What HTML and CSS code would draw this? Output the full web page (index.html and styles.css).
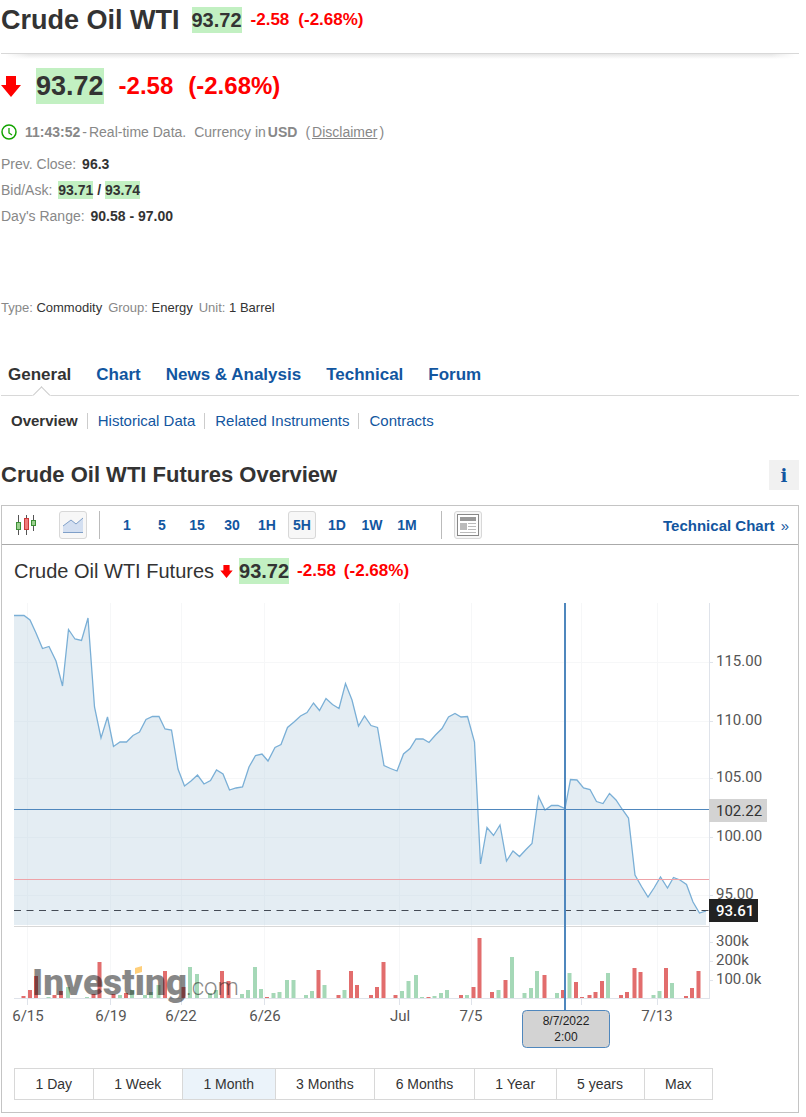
FILE: index.html
```html
<!DOCTYPE html>
<html lang="en">
<head>
  <meta charset="UTF-8" />
  <meta name="viewport" content="width=device-width, initial-scale=1.0"/>
  <title>Crude Oil WTI Futures</title>
  <link rel="stylesheet" href="styles.css">
</head>
<body>
  <header class="page-header">
    <h1>Crude Oil WTI</h1>
    <span class="price">93.72</span>
    <span class="change">-2.58</span>
    <span class="change">(-2.68%)</span>
  </header>

  <section class="quote">
    <svg class="arrow" width="20" height="21" viewBox="0 0 20 21" aria-hidden="true"><path fill="#f00" d="M5 0h10v9h5L10 21 0 9h5z"/></svg>
    <span class="price">93.72</span>
    <span class="change">-2.58</span>
    <span class="change">(-2.68%)</span>
  </section>
  <div class="quote-time">
    <svg width="16" height="16" viewBox="0 0 16 16" fill="none" aria-hidden="true"><circle cx="8" cy="8" r="7" stroke="#13a300" stroke-width="1.5"/><path stroke="#13a300" stroke-width="1.3" d="M8 4v5l3 2"/></svg>
    <p><b>11:43:52</b> <span>-</span> <span>Real-time Data.</span></p>
    <p><span>Currency in</span> <b>USD</b></p>
    <p><span>(</span> <a href="#">Disclaimer</a> <span>)</span></p>
  </div>
  <ul class="stats">
    <li>Prev. Close: <b>96.3</b></li>
    <li>Bid/Ask: <b><mark>93.71</mark> / <mark>93.74</mark></b></li>
    <li>Day's Range: <b>90.58 - 97.00</b></li>
  </ul>
  <ul class="details">
    <li>Type: <span>Commodity</span></li>
    <li>Group: <span>Energy</span></li>
    <li>Unit: <span>1 Barrel</span></li>
  </ul>

  <nav class="tabs">
    <a href="#" class="active">General</a>
    <a href="#">Chart</a>
    <a href="#">News &amp; Analysis</a>
    <a href="#">Technical</a>
    <a href="#">Forum</a>
  </nav>
  <nav class="subtabs">
    <a href="#" class="active">Overview</a>
    <a href="#">Historical Data</a>
    <a href="#">Related Instruments</a>
    <a href="#">Contracts</a>
  </nav>

  <div class="overview-title">
    <h2>Crude Oil WTI Futures Overview</h2>
    <button class="info-btn" aria-label="Information">i</button>
  </div>

  <section class="chart-box">
    <div class="toolbar">
      <button class="tool" aria-label="Candlestick chart">
        <svg width="22" height="22" viewBox="0 0 22 22">
          <path stroke="#555" d="M3.5 1v20M11.500 1v20M18.500 1v16"/>
          <rect x="1.500" y="8.500" width="4" height="7" fill="#9bd08f" stroke="#3d8f36"/>
          <rect x="9.500" y="4.500" width="4" height="11" fill="#f07c7c" stroke="#c93a3a"/>
          <rect x="16.500" y="6.500" width="4" height="5" fill="#9bd08f" stroke="#3d8f36"/>
        </svg>
      </button>
      <button class="tool active" aria-label="Area chart">
        <svg width="20" height="16" viewBox="0 0 20 16">
          <path fill="#d3dff1" d="M0 9 8 3l5 4 7-6v14H0z"/>
          <path fill="none" stroke="#7f9fc8" d="M0 9 8 3l5 4 7-6M0 15.500h20"/>
        </svg>
      </button>
      <span class="divider"></span>
      <div class="intervals">
        <button>1</button>
        <button>5</button>
        <button>15</button>
        <button>30</button>
        <button>1H</button>
        <button class="active">5H</button>
        <button>1D</button>
        <button>1W</button>
        <button>1M</button>
      </div>
      <span class="divider"></span>
      <button class="tool active" aria-label="News">
        <svg width="22" height="22" viewBox="0 0 22 22">
          <rect x=".5" y=".5" width="21" height="21" fill="#fff" stroke="#888"/>
          <path fill="#999" d="M3 3h16v4H3z"/>
          <path fill="#bbb" d="M3 9h7v7H3z"/>
          <path stroke="#bbb" d="M11 9.500h8M11 12.500h8M11 15.500h8M3 18.500h16"/>
        </svg>
      </button>
      <a href="#" class="technical-link">Technical Chart <span>»</span></a>
    </div>

    <div class="chart-title">
      <h3>Crude Oil WTI Futures</h3>
      <svg class="arrow" width="13" height="13" viewBox="0 0 20 21" aria-hidden="true"><path fill="#f00" d="M5 0h10v9h5L10 21 0 9h5z"/></svg>
      <span class="price">93.72</span>
      <span class="change">-2.58</span>
      <span class="change">(-2.68%)</span>
    </div>

    <svg class="chart" viewBox="14 600 772 450" role="img" aria-label="Crude Oil WTI price and volume, one month">
      <!-- grid and axes -->
      <path class="grid" d="M27.500 603V998M110.500 603V998M181.500 603V998M264.500 603V998M399.500 603V998M471.500 603V998M581.500 603V998M657.500 603V998M14 662.500H709M14 721.500H709M14 778.500H709M14 837.500H709M14 895.500H709"/>
      <path class="axis" d="M709.500 603V998M14 998.500H710M27.500 998v7M110.500 998v7M181.500 998v7M264.500 998v7M399.500 998v7M471.500 998v7M581.500 998v7M657.500 998v7M709 662.500h4M709 721.500h4M709 778.500h4M709 837.500h4M709 895.500h4M709 942.500h4M709 961.500h4M709 980.500h4"/>

      <!-- price -->
      <path class="area" d="M14 925V615.500L24 615.500 30 620 36 633 42.500 648.500 49 646.500 56 661 62.500 686 68.500 629.500 75 639 81.500 640.500 88 618 94.500 707 101 738 107.500 717 113.500 746.500 120 742 126.500 742 133 735.500 139.500 732 146 719.500 152.500 716.500 159 716.500 165 729 171.500 730 178 769 184.500 786 191 781 197.500 775 204 784 210.500 780.500 216.500 770 223 774 229.500 790 236 788 242.500 787 249 767 255.500 755.500 262 754 268 761 275 747.500 281 744.500 287.500 727.500 294 722 300.500 716 307 712.500 313.500 703 319.500 710.500 326 698.500 332.500 704.500 339 708.500 345.500 683.500 352 700 358.500 726 364.500 716 371 725.500 377.500 727.500 384 765.500 390.500 768.500 397 771 403.500 754 410 748.500 416 739 423 739 429 742.500 435.500 735 442 728.500 448.500 717 455 713.500 461 717 467.500 716.500 474.500 742 480.500 864 487 827.500 493.500 835.500 500 825 506.500 861 513 851 519.500 856.500 526 849.500 532 843.500 538.500 796.500 545 810 551.500 805.500 558 805.500 565 808.500 570.500 779.500 577 780 583.500 788 590 789.500 596.500 801.500 603 803.500 609.500 793.500 616 800 622 809 628.500 818 635 875 641.500 886.500 648 897 654 888 660.500 877 667.500 888 673.500 877.500 680 880 686.500 884.500 693 902 699.500 913 706 911V925z"/>
      <path class="line" d="M14 615.500L24 615.500 30 620 36 633 42.500 648.500 49 646.500 56 661 62.500 686 68.500 629.500 75 639 81.500 640.500 88 618 94.500 707 101 738 107.500 717 113.500 746.500 120 742 126.500 742 133 735.500 139.500 732 146 719.500 152.500 716.500 159 716.500 165 729 171.500 730 178 769 184.500 786 191 781 197.500 775 204 784 210.500 780.500 216.500 770 223 774 229.500 790 236 788 242.500 787 249 767 255.500 755.500 262 754 268 761 275 747.500 281 744.500 287.500 727.500 294 722 300.500 716 307 712.500 313.500 703 319.500 710.500 326 698.500 332.500 704.500 339 708.500 345.500 683.500 352 700 358.500 726 364.500 716 371 725.500 377.500 727.500 384 765.500 390.500 768.500 397 771 403.500 754 410 748.500 416 739 423 739 429 742.500 435.500 735 442 728.500 448.500 717 455 713.500 461 717 467.500 716.500 474.500 742 480.500 864 487 827.500 493.500 835.500 500 825 506.500 861 513 851 519.500 856.500 526 849.500 532 843.500 538.500 796.500 545 810 551.500 805.500 558 805.500 565 808.500 570.500 779.500 577 780 583.500 788 590 789.500 596.500 801.500 603 803.500 609.500 793.500 616 800 622 809 628.500 818 635 875 641.500 886.500 648 897 654 888 660.500 877 667.500 888 673.500 877.500 680 880 686.500 884.500 693 902 699.500 913 706 911"/>
      <path stroke="#d8d8d8" d="M14 926.500H709"/>
      <path stroke="#4f87bd" d="M14 809.500H709"/>
      <path stroke="#eea3a8" d="M14 879.500H709"/>
      <path stroke="#444b55" stroke-dasharray="7 5.500" d="M14 910.500H709"/>

      <!-- volume -->
      <path class="vol up" d="M48.500 998V997M68 998V987M87 998V997M120 998V995M132 998V990M145 998V995M151 998V992M158.500 998V985M190 998V967M197 998V974M210 998V993M216 998V990M242 998V994M248 998V990M255 998V967M261 998V989M273.500 998V993M279.500 998V992M287 998V980M293.500 998V980M306 998V995M312 998V991M324.500 998V985M344.500 998V990M402 998V991M408.500 998V981M416 998V975M422 998V997M434.500 998V996M441 998V993M447 998V990M467 998V995M498.500 998V990M512 998V957M524.500 998V993M531 998V988M537 998V971M557 998V993M569.500 998V973M608 998V973M653.500 998V995M659.500 998V991M672 998V983"/>
      <path class="vol down" d="M23.500 998V996M30 998V990M36 998V976M54.500 998V995M61 998V991M93.500 998V994M99.500 998V962M113.500 998V994M126 998V993M165 998V971M183.500 998V987M222 998V971M228.500 998V981M267 998V997M318.500 998V970M338.500 998V995M351 998V971M357 998V985M371 998V995M377 998V987M383.500 998V962M395.500 998V995M428.500 998V997M461 998V995M473.500 998V987M479.500 998V938M492 998V992M505.500 998V980M544.500 998V975M563 998V990M576 998V982M582 998V997M589.500 998V995M595.500 998V992M602 998V981M621 998V995M627 998V992M634.500 998V968M640.500 998V972M666 998V968M686 998V996M692 998V988M698.500 998V971"/>

      <!-- logo -->
      <g class="logo">
        <text class="logo-name" x="32" y="995">Investing</text>
        <text class="logo-com" x="186" y="995">.com</text>
      </g>
      <path fill="#fff" d="M133 964h11v11h-11z"/>
      <path fill="#ffcf7a" d="M135 968l7-2v6l-7 2z"/>

      <!-- crosshair -->
      <path stroke="#4f87bd" stroke-width="2" d="M565 603V1010"/>
      <rect x="522.500" y="1010.500" width="87" height="37" rx="4" fill="#d3d3d3" stroke="#4f87bd"/>
      <g class="cross-date">
        <text x="566" y="1025">8/7/2022</text>
        <text x="566" y="1041">2:00</text>
      </g>

      <g class="labels">
        <text x="716" y="666">115.00</text>
        <text x="716" y="725">110.00</text>
        <text x="716" y="782">105.00</text>
        <text x="716" y="841">100.00</text>
        <text x="716" y="899">95.00</text>
        <text x="716" y="946">300k</text>
        <text x="716" y="965">200k</text>
        <text x="716" y="984">100.0k</text>
      </g>
      <path fill="#d3d3d3" d="M709 799h58v23h-58z"/>
      <text class="cross-price" x="716" y="816">102.22</text>
      <path fill="#222" d="M709 899h49v23h-49z"/>
      <text class="last-price" x="716" y="916">93.61</text>
      <g class="labels dates">
        <text x="28" y="1021">6/15</text>
        <text x="111" y="1021">6/19</text>
        <text x="181" y="1021">6/22</text>
        <text x="265" y="1021">6/26</text>
        <text x="400" y="1021">Jul</text>
        <text x="471" y="1021">7/5</text>
        <text x="657" y="1021">7/13</text>
      </g>
    </svg>

    <div class="ranges">
      <button>1 Day</button>
      <button>1 Week</button>
      <button class="active">1 Month</button>
      <button>3 Months</button>
      <button>6 Months</button>
      <button>1 Year</button>
      <button>5 years</button>
      <button>Max</button>
    </div>
  </section>
</body>
</html>
```
FILE: styles.css
```css
* {
  box-sizing: border-box;
}
body {
  margin: 0;
  padding: 0 7px 4px 1px;
  font-family: "Liberation Sans", Arial, sans-serif;
  font-size: 14px;
  color: #333;
  background: #fff;
}
h1, h2, h3, p, ul {
  margin: 0;
  padding: 0;
}
ul {
  list-style: none;
}
a {
  color: #1256a0;
  text-decoration: none;
}
button {
  padding: 0;
  border: 0;
  background: none;
  font-family: inherit;
  color: inherit;
  cursor: pointer;
}
.price {
  background: #c2f0c2;
  font-size: 20px;
  line-height: 26px;
  font-weight: bold;
}
.change {
  color: #f00;
  font-size: 17px;
  font-weight: bold;
}
.page-header {
  position: relative;
  display: flex;
  align-items: center;
  gap: 9px;
  height: 54px;
  padding-bottom: 13px;
  border-bottom: 1px solid #d8d8d8;
}
.page-header::after {
  content: "";
  position: absolute;
  left: 4px;
  right: 4px;
  top: 100%;
  height: 5px;
  margin-top: 1px;
  background: linear-gradient(to right, #fff, transparent 3%, transparent 97%, #fff), linear-gradient(#e6e6e6, #fff);
}
.page-header h1 {
  font-size: 27px;
  line-height: 36px;
  margin-right: 3px;
}
.quote {
  display: flex;
  align-items: center;
  gap: 15px;
  margin-top: 14px;
}
.quote .price {
  font-size: 27px;
  line-height: 36px;
}
.quote .change {
  font-size: 24px;
}
.quote-time {
  display: flex;
  align-items: center;
  gap: 8px;
  margin-top: 18px;
  line-height: 20px;
  color: #888;
}
.quote-time p {
  display: flex;
  gap: 2px;
}
.quote-time a {
  color: #888;
  text-decoration: underline;
}
.stats {
  margin-top: 9px;
  line-height: 26px;
  color: #888;
}
.stats b {
  margin-left: 2px;
  color: #333;
}
.stats mark {
  padding: 1px 0;
  background: #c2f0c2;
  color: #333;
}
.details {
  display: flex;
  gap: 6px;
  margin-top: 69px;
  font-size: 13px;
  line-height: 20px;
  color: #888;
}
.details span {
  color: #333;
}
.tabs {
  display: flex;
  gap: 25px;
  margin-top: 37px;
  padding-left: 7px;
  border-bottom: 1px solid #d8d8d8;
  font-size: 17px;
  line-height: 40px;
  font-weight: bold;
}
.tabs .active {
  position: relative;
  color: #333;
}
.tabs .active::after {
  content: "";
  position: absolute;
  left: 50%;
  bottom: -7px;
  width: 11px;
  height: 11px;
  margin-left: -5px;
  border: 1px solid #ccc;
  border-right-color: transparent;
  border-bottom-color: transparent;
  background: #fff;
  transform: rotate(45deg);
}
.subtabs {
  display: flex;
  padding: 17px 0;
  font-size: 15px;
  line-height: 16px;
}
.subtabs a {
  padding: 0 9px 0 10px;
}
.subtabs a + a {
  border-left: 1px solid #ccc;
}
.subtabs .active {
  color: #333;
  font-weight: bold;
}
.overview-title {
  display: flex;
  align-items: center;
  justify-content: space-between;
  margin-top: 14px;
}
.overview-title h2 {
  font-size: 22px;
  line-height: 30px;
}
.info-btn {
  width: 30px;
  height: 30px;
  background: #f1f1f1;
  color: #1256a0;
  font-family: "DejaVu Serif", serif;
  font-size: 18px;
  font-weight: bold;
}
.chart-box {
  margin-top: 15px;
  border: 1px solid #c4c4c4;
}
.toolbar {
  display: flex;
  align-items: center;
  height: 39px;
  padding: 0 9px 0 10px;
  border-bottom: 1px solid #aaa;
  color: #1256a0;
  font-size: 15px;
  font-weight: bold;
}
.toolbar button {
  display: flex;
  align-items: center;
  justify-content: center;
  width: 28px;
  height: 28px;
  border: 1px solid transparent;
  border-radius: 3px;
  font-size: 14px;
  font-weight: bold;
}
.toolbar button.active {
  border-color: #d8d8d8;
  background: #f7f7f7;
}
.tool + .tool {
  margin-left: 19px;
}
.divider {
  width: 1px;
  height: 28px;
  margin: 0 12px;
  background: #bbb;
}
.intervals {
  display: flex;
  gap: 7px;
  margin: 0 8px 0 1px;
}
.technical-link {
  margin-left: auto;
}
.technical-link span {
  margin-left: 2px;
  font-weight: normal;
}
.chart-title {
  display: flex;
  align-items: center;
  gap: 8px;
  padding: 13px 12px 0;
}
.chart-title h3 {
  font-size: 20px;
  line-height: 26px;
  font-weight: normal;
}
.chart-title .arrow {
  margin: 0 -2px;
}
.chart {
  display: block;
  width: calc(100% - 24px);
  margin: 16px 12px 18px;
  overflow: visible;
}
.grid {
  stroke: #f6f7f8;
}
.axis {
  stroke: #dfe3ea;
}
.area {
  fill: #bcd2e1;
  fill-opacity: 0.4;
}
.line {
  fill: none;
  stroke: #7aafd6;
  stroke-width: 1.3px;
}
.vol {
  stroke-width: 4px;
}
.up {
  stroke: #a5d8b7;
}
.down {
  stroke: #e26d6d;
}
.logo {
  font-family: Roboto, sans-serif;
  fill: #111;
  opacity: 0.5;
}
.logo-name {
  font-size: 37px;
  font-weight: 900;
}
.logo-com {
  font-size: 24px;
  font-weight: 300;
}
.labels {
  font-family: Roboto, sans-serif;
  font-size: 15px;
  fill: #555;
}
.dates {
  text-anchor: middle;
}
.cross-price,
.last-price {
  font-family: Roboto, sans-serif;
  font-size: 15px;
  fill: #333;
}
.last-price {
  font-weight: 500;
  fill: #fff;
}
.cross-date {
  font-size: 12px;
  text-anchor: middle;
  fill: #222;
}
.ranges {
  display: flex;
  margin: 0 85px 12px 12px;
  border: 1px solid #d8d8d8;
}
.ranges button {
  flex: auto;
  padding: 0 18px;
  font-size: 14px;
  line-height: 30px;
}
.ranges button + button {
  border-left: 1px solid #d8d8d8;
}
.ranges .active {
  background: #ebf3fa;
}
```
